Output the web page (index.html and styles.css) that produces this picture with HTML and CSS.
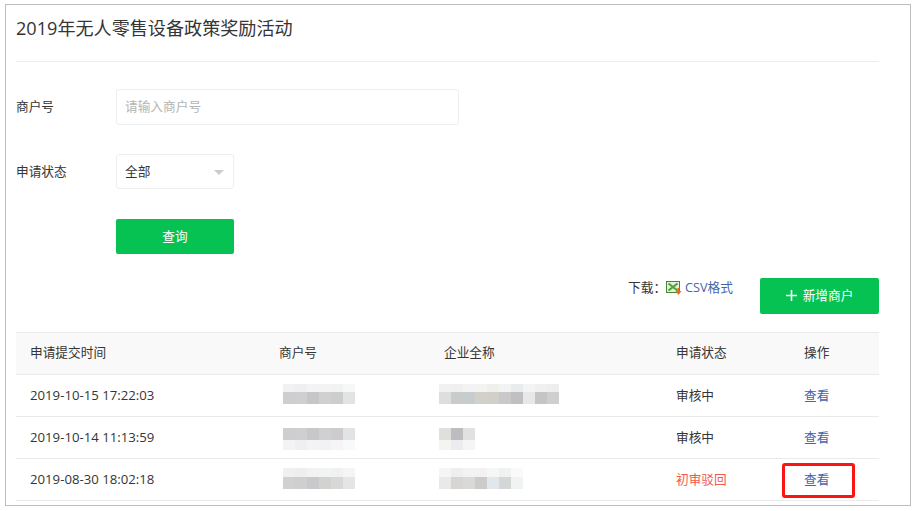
FILE: index.html
```html
<!DOCTYPE html>
<html lang="zh">
<head>
<meta charset="utf-8">
<title>2019年无人零售设备政策奖励活动</title>
<link rel="stylesheet" href="styles.css">
</head>
<body>
<main class="frame">
  <h1 class="title">2019年无人零售设备政策奖励活动</h1>
  <form class="filters">
    <div class="field">
      <label class="label">商户号</label>
      <input class="input" type="text" placeholder="请输入商户号">
    </div>
    <div class="field">
      <label class="label">申请状态</label>
      <div class="select">全部<span class="caret"></span></div>
    </div>
    <div class="field">
      <span class="label"></span>
      <button class="btn btn-query" type="button">查询</button>
    </div>
  </form>
  <div class="actions">
    <div class="download">下载：<svg class="xls" width="16" height="14" viewBox="0 0 16 14"><rect x="0.5" y="0.5" width="13" height="11" fill="#e3f0da" stroke="#3f8a2e"/><path d="M2.500 2.500l9 7M11.500 2.500l-9 7" stroke="#55a03c" stroke-width="2.200"/><path d="M12.500 7v3" stroke="#f0641e" stroke-width="2"/><path d="M9.500 10h6l-3 4z" fill="#f0641e"/></svg><a class="link" href="#">CSV格式</a></div>
    <button class="btn btn-add" type="button"><svg class="plus" width="11" height="11" viewBox="0 0 11 11"><path d="M5.500 0v11M0 5.500h11" stroke="#fff" stroke-width="1.600"/></svg>新增商户</button>
  </div>
  <table class="table">
    <thead>
      <tr><th class="c1">申请提交时间</th><th class="c2">商户号</th><th class="c3">企业全称</th><th class="c4">申请状态</th><th class="c5">操作</th></tr>
    </thead>
    <tbody>
      <tr>
        <td class="date">2019-10-15 17:22:03</td>
        <td class="mosaic-cell"><svg class="mosaic m-a" width="72" height="20" viewBox="0 0 72 20"><g><rect width="12" height="8" fill="#f1f1f3"/><rect x="12" width="12" height="8" fill="#efefef"/><rect x="24" width="12" height="8" fill="#f3f3f3"/><rect x="36" width="12" height="8" fill="#f3f3f3"/><rect x="48" width="12" height="8" fill="#f2f2f2"/><rect x="60" width="12" height="8" fill="#f6f7f9"/></g><g><rect y="8" width="12" height="12" fill="#cfcdcf"/><rect x="12" y="8" width="12" height="12" fill="#cecfd1"/><rect x="24" y="8" width="12" height="12" fill="#c6c6c9"/><rect x="36" y="8" width="12" height="12" fill="#d0d0d0"/><rect x="48" y="8" width="12" height="12" fill="#cdcdcd"/><rect x="60" y="8" width="12" height="12" fill="#e2e4e3"/></g></svg></td>
        <td class="mosaic-cell"><svg class="mosaic m-a" width="120" height="20" viewBox="0 0 120 20"><g><rect width="12" height="8" fill="#f1f1f1"/><rect x="12" width="12" height="8" fill="#f0f0f0"/><rect x="24" width="12" height="8" fill="#f3f3f3"/><rect x="36" width="12" height="8" fill="#f3f3f1"/><rect x="48" width="12" height="8" fill="#efefeb"/><rect x="60" width="12" height="8" fill="#f2f3f3"/><rect x="72" width="12" height="8" fill="#e9ecec"/><rect x="84" width="12" height="8" fill="#f3f4f4"/><rect x="96" width="12" height="8" fill="#f0f0f0"/><rect x="108" width="12" height="8" fill="#eeeeee"/></g><g><rect y="8" width="12" height="12" fill="#dfdedc"/><rect x="12" y="8" width="12" height="12" fill="#c9cccc"/><rect x="24" y="8" width="12" height="12" fill="#c7cdcf"/><rect x="36" y="8" width="12" height="12" fill="#d2d0cb"/><rect x="48" y="8" width="12" height="12" fill="#d2cfc8"/><rect x="60" y="8" width="12" height="12" fill="#c9c9c9"/><rect x="72" y="8" width="12" height="12" fill="#c0bfc2"/><rect x="84" y="8" width="12" height="12" fill="#e8e9e6"/><rect x="96" y="8" width="12" height="12" fill="#c6c4c6"/><rect x="108" y="8" width="12" height="12" fill="#cfcfcf"/></g></svg></td>
        <td>审核中</td>
        <td><a class="link" href="#">查看</a></td>
      </tr>
      <tr>
        <td class="date">2019-10-14 11:13:59</td>
        <td class="mosaic-cell"><svg class="mosaic m-b" width="72" height="22" viewBox="0 0 72 22"><g><rect width="12" height="12" fill="#cfcdcf"/><rect x="12" width="12" height="12" fill="#cecfd1"/><rect x="24" width="12" height="12" fill="#c8c8ca"/><rect x="36" width="12" height="12" fill="#d0d0d0"/><rect x="48" width="12" height="12" fill="#cdcbcd"/><rect x="60" width="12" height="12" fill="#e1e3e6"/></g><g><rect y="12" width="12" height="10" fill="#f3f3f5"/><rect x="12" y="12" width="12" height="10" fill="#efefef"/><rect x="24" y="12" width="12" height="10" fill="#f3f3f3"/><rect x="36" y="12" width="12" height="10" fill="#f0f2f4"/><rect x="48" y="12" width="12" height="10" fill="#f5f5f5"/><rect x="60" y="12" width="12" height="10" fill="#f8f9fb"/></g></svg></td>
        <td class="mosaic-cell"><svg class="mosaic m-b" width="36" height="22" viewBox="0 0 36 22"><rect width="12" height="12" fill="#e0e0da"/><rect x="12" width="12" height="12" fill="#bdbdc1"/><rect x="24" width="12" height="12" fill="#e0e1e3"/><rect y="12" width="12" height="10" fill="#f5f4f2"/><rect x="12" y="12" width="12" height="10" fill="#ecebed"/><rect x="24" y="12" width="12" height="10" fill="#f5f5f5"/></svg></td>
        <td>审核中</td>
        <td><a class="link" href="#">查看</a></td>
      </tr>
      <tr>
        <td class="date">2019-08-30 18:02:18</td>
        <td class="mosaic-cell"><svg class="mosaic m-a" width="72" height="21" viewBox="0 0 72 21"><g><rect width="12" height="9" fill="#f0f0f2"/><rect x="12" width="12" height="9" fill="#eeeeee"/><rect x="24" width="12" height="9" fill="#f2f2f2"/><rect x="36" width="12" height="9" fill="#f2f3f3"/><rect x="48" width="12" height="9" fill="#f1f1f1"/><rect x="60" width="12" height="9" fill="#f4f5f7"/></g><g><rect y="9" width="12" height="12" fill="#d2d0d0"/><rect x="12" y="9" width="12" height="12" fill="#cfcfd1"/><rect x="24" y="9" width="12" height="12" fill="#c9c9cb"/><rect x="36" y="9" width="12" height="12" fill="#d2d2d0"/><rect x="48" y="9" width="12" height="12" fill="#d8d8d6"/><rect x="60" y="9" width="12" height="12" fill="#e4e6e5"/></g></svg></td>
        <td class="mosaic-cell"><svg class="mosaic m-a" width="84" height="21" viewBox="0 0 84 21"><g><rect width="12" height="9" fill="#f5f5f5"/><rect x="12" width="12" height="9" fill="#eeeeee"/><rect x="24" width="12" height="9" fill="#f2f2f2"/><rect x="36" width="12" height="9" fill="#f3f2f1"/><rect x="48" width="12" height="9" fill="#f5f6f6"/><rect x="60" width="12" height="9" fill="#f0f2f2"/><rect x="72" width="12" height="9" fill="#fafafa"/></g><g><rect y="9" width="12" height="12" fill="#e9e9ea"/><rect x="12" y="9" width="12" height="12" fill="#d6d5d3"/><rect x="24" y="9" width="12" height="12" fill="#d9d9d7"/><rect x="36" y="9" width="12" height="12" fill="#cbcbcb"/><rect x="48" y="9" width="12" height="12" fill="#e2e7eb"/><rect x="60" y="9" width="12" height="12" fill="#d5d7d7"/><rect x="72" y="9" width="12" height="12" fill="#f1f3f3"/></g></svg></td>
        <td class="rejected">初审驳回</td>
        <td><a class="link marked" href="#">查看</a></td>
      </tr>
    </tbody>
  </table>
</main>
</body>
</html>
```

FILE: styles.css
```css
*, *::before, *::after { box-sizing: border-box; }
html, body { margin: 0; padding: 0; background: #fff; }
body {
  width: 917px;
  height: 511px;
  overflow: hidden;
  padding: 4px 6px 5px 5px;
  font-family: "Open Sans", "Noto Sans CJK SC", sans-serif;
  font-size: 12.7px;
  color: #353535;
}
.frame {
  width: 906px;
  height: 502px;
  border: 1px solid #bdbdbd;
  padding: 0 31px 0 10px;
  overflow: hidden;
}
.title {
  margin: 0;
  height: 57px;
  padding-top: 10px;
  font-size: 18.1px;
  line-height: 26px;
  font-weight: 400;
  color: #353535;
  border-bottom: 1px solid #ededed;
}
.filters { display: flex; flex-direction: column; gap: 30px; padding-top: 27px; }
.field { display: flex; align-items: center; height: 35px; }
.label { width: 100px; padding-bottom: 2px; color: #353535; }
.input {
  width: 343px;
  height: 36px;
  padding: 0 8px 1px;
  border: 1px solid #eeeeee;
  border-radius: 3px;
  font: inherit;
  outline: none;
}
.input::placeholder { color: #b4b4b4; }
.select {
  position: relative;
  width: 118px;
  height: 35px;
  padding-left: 8px;
  line-height: 33px;
  border: 1px solid #eeeeee;
  border-radius: 3px;
}
.caret {
  position: absolute;
  right: 9px;
  top: 15px;
  border-left: 5px solid transparent;
  border-right: 5px solid transparent;
  border-top: 5px solid #cccccc;
}
.btn {
  display: flex;
  align-items: center;
  justify-content: center;
  border: 0;
  border-radius: 2px;
  background: #06c253;
  color: #fff;
  font: inherit;
  padding: 0 0 2px;
}
.btn-query { width: 118px; height: 35px; }
.actions {
  display: flex;
  justify-content: flex-end;
  align-items: flex-start;
  gap: 27px;
  margin-top: 24px;
}
.download { display: flex; align-items: center; height: 17px; color: #353535; }
.xls { margin: 2px 3px 0 0; }
.link { color: #4564a8; text-decoration: none; }
.btn-add { width: 119px; height: 36px; padding-bottom: 3px; }
.plus { margin: 2px 6px 0 0; }
.table {
  width: 863px;
  margin-top: 18px;
  border-collapse: collapse;
  table-layout: fixed;
}
.table th, .table td {
  height: 42px;
  padding: 0 0 2px 13px;
  border-bottom: 1px solid #eaeaea;
  font-weight: 400;
  text-align: left;
  color: #353535;
}
.table th { background: #f9f9f9; border-top: 1px solid #eaeaea; padding-bottom: 4px; }
.table th:first-child, .table td:first-child { padding-left: 14px; }
.table td.date { font-size: 13.2px; }
.c1 { width: 250px; }
.c2 { width: 165px; }
.c3 { width: 232px; }
.c4 { width: 128px; }
.c5 { width: 88px; }
.table td.mosaic-cell { padding: 0 0 0 17px; }
.table td.mosaic-cell + .mosaic-cell { padding-left: 8px; }
.table td .mosaic { display: block; }
.table td .m-a { margin-bottom: 3px; }
.table td .m-b { margin-top: 2px; }
.table td.rejected { color: #f4574f; }
.link.marked { position: relative; display: inline-block; }
.link.marked::after {
  content: "";
  position: absolute;
  left: -22px;
  top: -6px;
  width: 73px;
  height: 35px;
  border: 3px solid #fa1414;
  border-radius: 3px;
}
```
